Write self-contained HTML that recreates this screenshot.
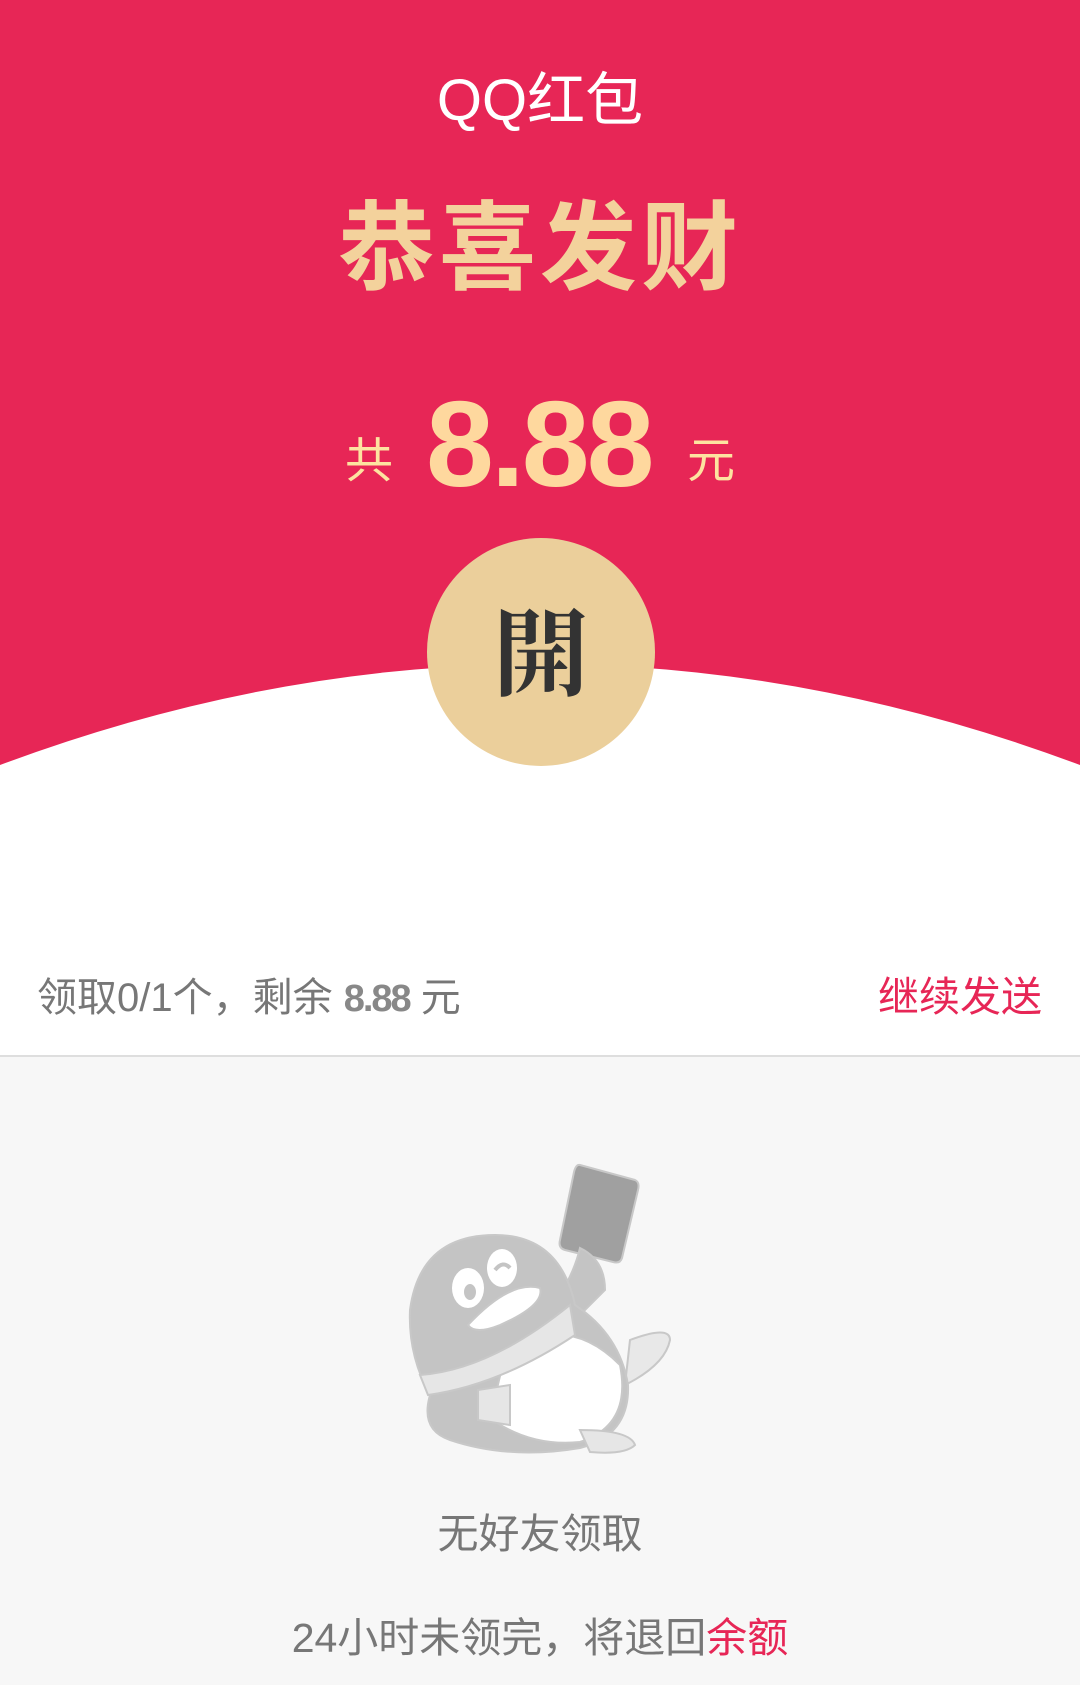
<!DOCTYPE html>
<html><head><meta charset="utf-8"><style>
html,body{margin:0;padding:0;}
body{width:1080px;height:1685px;position:relative;overflow:hidden;background:#f7f7f7;font-family:"Liberation Sans","Noto Sans CJK SC",sans-serif;}
.a{position:absolute;white-space:nowrap;line-height:1;}
</style></head><body>
<div class="a" style="left:0;top:0;width:1080px;height:1055px;background:#fff;border-bottom:2px solid #dedede;"></div>
<svg class="a" style="left:0;top:0" width="1080" height="800"><path d="M0 0H1080V765Q541 563 0 765Z" fill="#e72656"/></svg>
<div class="a" style="left:0;width:1080px;text-align:center;top:72px;font-size:58px;color:#fff;">QQ红包</div>
<div class="a" style="left:0;width:1080px;text-align:center;top:200px;font-size:97px;font-weight:bold;color:#f3d29c;letter-spacing:4px;">恭喜发财</div>
<div class="a" style="left:345px;top:438px;font-size:48px;color:#fde3a0;">共</div>
<div class="a" style="left:426px;top:383px;font-size:122px;color:#fed89e;font-weight:bold;letter-spacing:-3px;">8.88</div>
<div class="a" style="left:687px;top:438px;font-size:48px;color:#fde3a0;">元</div>
<div class="a" style="left:427px;top:538px;width:228px;height:228px;border-radius:50%;background:#ebcf9b;"></div>
<div class="a" style="left:427px;top:600px;width:228px;text-align:center;font-size:96px;font-weight:bold;color:#333;font-family:'Noto Serif CJK SC',serif;">開</div>
<div class="a" style="left:37px;top:978px;font-size:40px;color:#777;">领取0/1个，剩余 <b style="color:#888;font-size:38px;letter-spacing:-2px;">8.88</b> 元</div>
<div class="a" style="right:38px;top:977px;font-size:41px;color:#e72656;">继续发送</div>
<svg class="a" style="left:380px;top:1140px" width="320" height="340" viewBox="0 0 320 340">
<g stroke="#c8c8c8" stroke-width="2">
<path d="M200 25 L255 40 Q260 42 258 50 L242 118 Q240 124 233 122 L185 110 Q178 108 180 100 L194 32 Q196 24 200 25Z" fill="#a0a0a0"/>
<path d="M200 108 Q225 120 225 150 L200 175 L180 155 Q195 130 200 108Z" fill="#c4c4c4"/>
<path d="M250 200 Q290 185 290 200 Q285 225 245 245Z" fill="#e8e8e8"/>
<path d="M115 95 Q180 95 195 165 Q240 195 248 245 Q250 295 200 308 Q130 320 70 300 Q40 290 50 255 Q28 215 30 170 Q40 95 115 95Z" fill="#c4c4c4"/>
<path d="M125 215 Q185 170 240 225 Q252 285 200 302 Q150 307 110 278Z" fill="#fff"/>
<path d="M40 235 Q110 230 190 165 L195 195 Q120 245 48 255Z" fill="#e6e6e6"/>
<path d="M98 250 L130 245 L130 285 L98 280Z" fill="#e6e6e6"/>
<path d="M200 290 Q250 290 255 305 Q245 315 210 312Z" fill="#e6e6e6"/>
<path d="M88 185 Q130 140 160 148 Q165 165 120 185 Q95 195 88 185Z" fill="#fff"/>
</g>
<ellipse cx="88" cy="148" rx="16" ry="20" fill="#fff"/><ellipse cx="90" cy="152" rx="6" ry="8" fill="#c4c4c4"/>
<ellipse cx="122" cy="128" rx="15" ry="19" fill="#fff"/><path d="M115 130 Q123 120 130 128" stroke="#c4c4c4" stroke-width="4" fill="none"/>
</svg>
<div class="a" style="left:0;width:1080px;text-align:center;top:1514px;font-size:41px;color:#777;">无好友领取</div>
<div class="a" style="left:0;width:1080px;text-align:center;top:1618px;font-size:41px;color:#777;">24小时未领完，将退回<span style="color:#e72656">余额</span></div>
</body></html>
